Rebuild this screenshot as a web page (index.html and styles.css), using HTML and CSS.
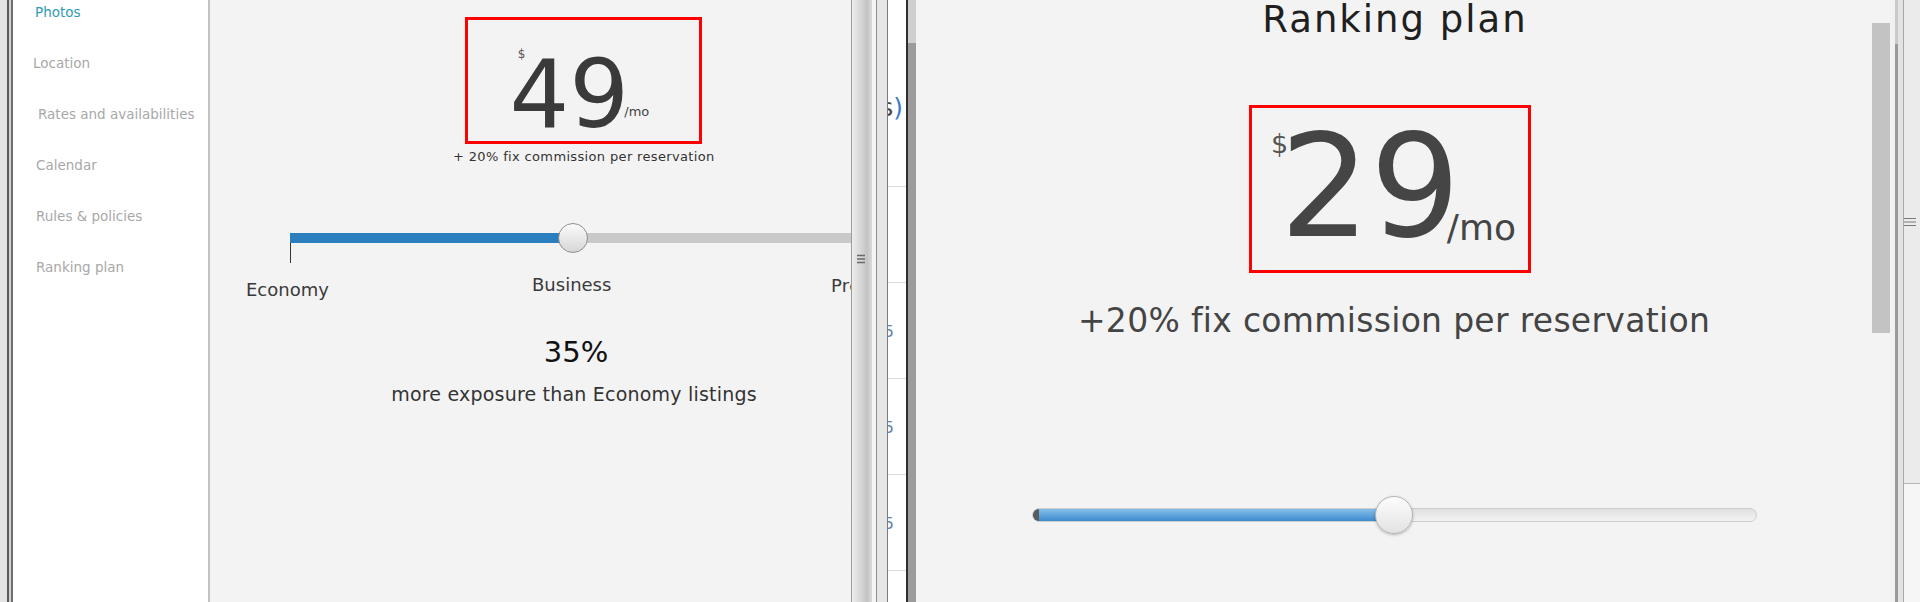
FILE: index.html
```html
<!DOCTYPE html>
<html lang="en">
<head>
<meta charset="utf-8">
<title>Ranking plan</title>
<link rel="stylesheet" href="styles.css">
</head>
<body>
<div class="screen">
  <div class="frame-left"></div>

  <ul class="sidebar">
    <li class="nav-item active">Photos</li>
    <li class="nav-item shift-l">Location</li>
    <li class="nav-item shift-r">Rates and availabilities</li>
    <li class="nav-item">Calendar</li>
    <li class="nav-item">Rules &amp; policies</li>
    <li class="nav-item">Ranking plan</li>
  </ul>

  <section class="panel-left">
    <div class="price-box-sm">
      <span class="cur-sm">$</span>
      <span class="amt-sm">49</span>
      <span class="per-sm">/mo</span>
    </div>
    <div class="commission-sm">+ 20% fix commission per reservation</div>
    <div class="slider-sm">
      <div class="track-sm"></div>
      <div class="thumb-sm"></div>
    </div>
    <div class="tick"></div>
    <div class="labels">
      <span class="lbl-eco">Economy</span>
      <span class="lbl-bus">Business</span>
      <span class="lbl-pre">Premium</span>
    </div>
    <div class="stat">
      <div class="stat-num">35%</div>
      <div class="stat-text">more exposure than Economy listings</div>
    </div>
  </section>

  <div class="split-a">
    <svg class="grip-a" viewBox="0 0 8 12" width="8" height="12"><path d="M0 2.5H8M0 6H8M0 9.5H8" stroke="#6a6a6a" stroke-width="1.3"/></svg>
  </div>
  <div class="gap-a"></div>
  <div class="strip-b"></div>

  <div class="table-col">
    <div class="cell first"><div class="frag-paren"><span class="frag-s">s</span><span class="frag-p">)</span></div></div>
    <div class="cell"></div>
    <div class="cell"><div class="frag-5">5</div></div>
    <div class="cell"><div class="frag-5">5</div></div>
    <div class="cell"><div class="frag-5">5</div></div>
    <div class="cell"></div>
  </div>
  <div class="scroll-l"></div>

  <section class="panel-right">
    <div class="content-r">
      <h1 class="title">Ranking plan</h1>
      <div class="price-box-lg">
        <span class="cur-lg">$</span>
        <span class="amt-lg">29</span>
        <span class="per-lg">/mo</span>
      </div>
      <div class="commission-lg">+20% fix commission per reservation</div>
      <div class="slider-lg">
        <div class="track-lg"><div class="fill-lg"></div></div>
        <div class="thumb-lg"></div>
      </div>
    </div>
    <div class="vscroll"><div class="vthumb"></div></div>
  </section>

  <div class="edge-r">
    <div class="re-a"></div>
    <div class="re-b"></div>
    <div class="re-c"></div>
    <div class="re-d"></div>
    <div class="re-e">
      <div class="re-e-top">
        <svg class="grip-r" viewBox="0 0 12 10" width="12" height="10"><path d="M0 1.5H12M0 5H12M0 8.5H12" stroke="#7a7a7a" stroke-width="1.2"/></svg>
      </div>
    </div>
  </div>
</div>
</body>
</html>
```

FILE: styles.css
```css
html, body {
  margin: 0;
  padding: 0;
}

body {
  width: 1920px;
  height: 602px;
  overflow: hidden;
  background: #f3f3f3;
  font-family: "DejaVu Sans", "Liberation Sans", sans-serif;
}

.screen {
  display: flex;
  height: 602px;
}

/* far-left window frame */
.frame-left {
  width: 13px;
  flex: none;
  background: linear-gradient(to right, #e3e3e3 0 7px, #5a5a5a 7px 9px, #d2d2d2 9px 11px, #6e6e6e 11px 13px);
}

/* sidebar */
.sidebar {
  width: 195px;
  flex: none;
  margin: 0;
  padding: 0;
  list-style: none;
  background: #ffffff;
  border-right: 2px solid #c3c3c3;
  display: flex;
  flex-direction: column;
  gap: 27px;
}

.nav-item {
  height: 24px;
  line-height: 24px;
  font-size: 13.5px;
  color: #a8a8a8;
  padding-left: 23px;
  white-space: nowrap;
}

.nav-item.active {
  color: #2f9ab5;
  padding-left: 22px;
}

.nav-item.shift-l { padding-left: 20px; }
.nav-item.shift-r { padding-left: 25px; }

/* left panel */
.panel-left {
  width: 641px;
  flex: none;
  background: #f3f3f3;
  border-right: 1px solid #9c9c9c;
  overflow: hidden;
  display: flex;
  flex-direction: column;
  align-items: flex-start;
}

.price-box-sm {
  margin: 17px 0 0 255px;
  width: 237px;
  height: 127px;
  box-sizing: border-box;
  border: 3px solid #ff0000;
  display: flex;
  justify-content: center;
  align-items: flex-start;
  color: #3a3a3a;
  flex: none;
}

.cur-sm {
  font-size: 12px;
  line-height: 1;
  margin-top: 28px;
  margin-right: -15.8px;
  color: #555;
}

.amt-sm {
  font-size: 94px;
  line-height: 1;
  margin-top: 27.5px;
}

.per-sm {
  font-size: 13px;
  line-height: 1;
  margin-top: 85px;
  margin-left: -4.9px;
  color: #444;
}

.commission-sm {
  margin: 5px 0 0 243px;
  font-size: 13px;
  line-height: 16px;
  letter-spacing: 0.35px;
  color: #333;
  white-space: nowrap;
}

.slider-sm {
  position: relative;
  margin: 58px 0 0 80px;
  width: 600px;
  height: 30px;
  flex: none;
  display: flex;
  align-items: center;
}

.track-sm {
  width: 100%;
  height: 10px;
  background: linear-gradient(to right, #2b7fbf 0 283px, #c9c9c9 283px);
}

.thumb-sm {
  position: absolute;
  left: 268px;
  top: 0;
  width: 30px;
  height: 30px;
  box-sizing: border-box;
  border-radius: 50%;
  border: 1px solid #8f8f8f;
  background: linear-gradient(#fbfbfb, #d6d6d6);
}

.tick {
  width: 1px;
  height: 20px;
  margin: -10px 0 0 80px;
  background: #333;
  flex: none;
}

.labels {
  display: flex;
  align-items: flex-start;
  margin: 13px 0 0 36px;
  font-size: 18px;
  line-height: 1;
  color: #3a3a3a;
  flex: none;
}

.labels span {
  flex: none;
  white-space: nowrap;
}

.lbl-eco { width: 286px; margin-top: 5px; }
.lbl-bus { width: 299px; }
.lbl-pre { margin-top: 1px; letter-spacing: 0.3px; }

.stat {
  margin: 38.5px 0 0 166px;
  width: 400px;
  text-align: center;
  flex: none;
}

.stat-num {
  font-size: 29px;
  line-height: 1;
  color: #111;
}

.stat-text {
  margin-top: 18.5px;
  margin-left: -4px;
  font-size: 19px;
  line-height: 1;
  letter-spacing: 0.2px;
  color: #333;
  white-space: nowrap;
}

/* splitter between windows */
.split-a {
  width: 20px;
  flex: none;
  background: linear-gradient(to right, #ededed, #d6d6d6 45%, #c3c3c3 75%, #dadada);
  display: flex;
  flex-direction: column;
  align-items: flex-start;
}

.grip-a {
  margin: 253px 0 0 5px;
}

.gap-a {
  width: 4px;
  flex: none;
  background: #f4f4f4;
}

.strip-b {
  width: 10px;
  flex: none;
  background: #e6e6e6;
  border-left: 1px solid #8e8e8e;
  border-right: 1px solid #7a7a7a;
}

.table-col {
  width: 18px;
  flex: none;
  background: #ffffff;
  border-right: 2px solid #2e2e2e;
  overflow: hidden;
}

.cell {
  height: 95px;
  border-bottom: 1px solid #dddddd;
  display: flex;
  justify-content: flex-end;
  align-items: flex-start;
}

.cell.first {
  height: 186px;
}

.frag-paren {
  display: flex;
  flex: none;
  margin-top: 95px;
  padding-right: 3px;
  font-size: 25px;
  line-height: 1;
  white-space: nowrap;
}

.frag-s { color: #4a4a4a; }
.frag-p { color: #3b7dc4; }

.frag-5 {
  flex: none;
  margin-top: 41px;
  padding-right: 12px;
  font-size: 16px;
  line-height: 1;
  color: #6383b1;
}

.scroll-l {
  width: 8px;
  flex: none;
  background: linear-gradient(to bottom, #cfcfcf 0 43px, #9b9b9b 43px);
}

/* right panel */
.panel-right {
  width: 975px;
  flex: none;
  display: flex;
  background: #f3f3f3;
}

.content-r {
  width: 956px;
  flex: none;
  display: flex;
  flex-direction: column;
  align-items: center;
}

.title {
  margin: 1px 0 0 2px;
  font-size: 37px;
  font-weight: normal;
  line-height: 1;
  letter-spacing: 2px;
  color: #1f1f1f;
}

.price-box-lg {
  margin-top: 67px;
  margin-right: 8px;
  width: 282px;
  height: 168px;
  box-sizing: border-box;
  border: 3px solid #ff0000;
  padding-left: 7px;
  display: flex;
  justify-content: center;
  align-items: flex-start;
  color: #454545;
  flex: none;
}

.cur-lg {
  font-size: 27px;
  line-height: 1;
  margin-top: 22px;
  margin-right: -8.4px;
  color: #555;
}

.amt-lg {
  font-size: 142px;
  line-height: 1;
  margin-top: 8px;
}

.per-lg {
  font-size: 36px;
  line-height: 1;
  margin-top: 101.5px;
  margin-left: -13.6px;
}

.commission-lg {
  margin-top: 31px;
  font-size: 33px;
  line-height: 1;
  letter-spacing: 0.3px;
  color: #444;
  white-space: nowrap;
}

.slider-lg {
  position: relative;
  margin-top: 159px;
  width: 725px;
  height: 38px;
  display: flex;
  align-items: center;
  flex: none;
}

.track-lg {
  width: 100%;
  height: 14px;
  box-sizing: border-box;
  border: 1px solid #cdcdcd;
  border-radius: 7px;
  background: linear-gradient(#e0e0e0, #f2f2f2);
  overflow: hidden;
}

.fill-lg {
  width: 50%;
  height: 100%;
  background:
    linear-gradient(to right, #5a5a5a 0 6px, transparent 6px),
    linear-gradient(#85c0ea, #3d8ace);
}

.thumb-lg {
  position: absolute;
  left: calc(50% - 19px);
  top: 0;
  width: 38px;
  height: 38px;
  box-sizing: border-box;
  border-radius: 50%;
  border: 1px solid #b5b5b5;
  background: linear-gradient(#fdfdfd, #e2e2e2);
  box-shadow: 0 1px 3px rgba(0, 0, 0, 0.25);
}

.vscroll {
  width: 19px;
  flex: none;
}

.vthumb {
  margin-top: 23px;
  width: 18px;
  height: 310px;
  background: #c3c3c3;
}

/* far-right frame */
.edge-r {
  display: flex;
  width: 29px;
  flex: none;
}

.re-a { width: 4px; background: #f1f1f1; }
.re-b { width: 3px; background: linear-gradient(to bottom, #cacaca 0 44px, #9a9a9a 44px); }
.re-c { width: 5px; background: #e3e3e3; }
.re-d { width: 1px; background: #a8a8a8; }
.re-e { width: 16px; background: #f6f6f6; }

.re-e-top {
  height: 483px;
  background: #ebebeb;
  border-bottom: 1px solid #b5b5b5;
  display: flex;
  flex-direction: column;
}

.grip-r {
  margin-top: 217px;
}
```
